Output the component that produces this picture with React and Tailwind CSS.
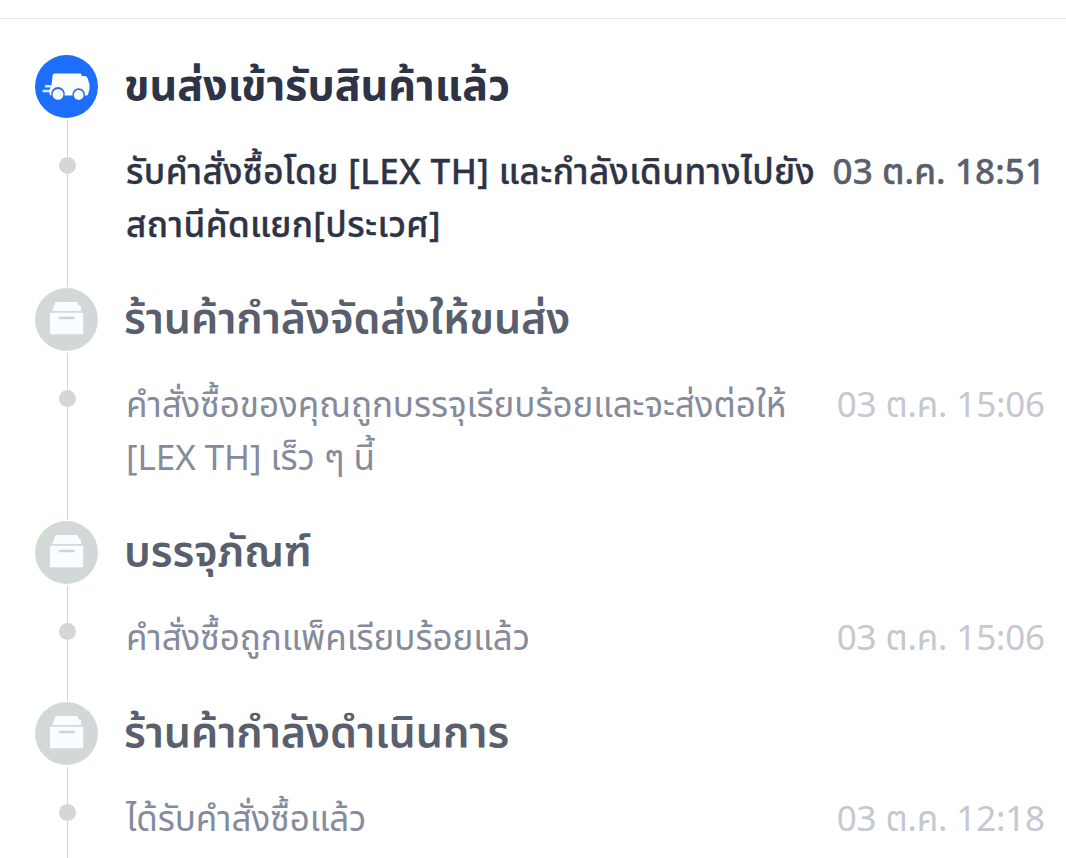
const steps = [
  {
    id: 1,
    active: true,
    title: 'ขนส่งเข้ารับสินค้าแล้ว',
    lines: ['รับคำสั่งซื้อโดย [LEX TH] และกำลังเดินทางไปยัง', 'สถานีคัดแยก[ประเวศ]'],
    time: '03 ต.ค. 18:51',
  },
  {
    id: 2,
    title: 'ร้านค้ากำลังจัดส่งให้ขนส่ง',
    lines: ['คำสั่งซื้อของคุณถูกบรรจุเรียบร้อยและจะส่งต่อให้', '[LEX TH] เร็ว ๆ นี้'],
    time: '03 ต.ค. 15:06',
  },
  {
    id: 3,
    title: 'บรรจุภัณฑ์',
    lines: ['คำสั่งซื้อถูกแพ็คเรียบร้อยแล้ว'],
    time: '03 ต.ค. 15:06',
  },
  {
    id: 4,
    title: 'ร้านค้ากำลังดำเนินการ',
    lines: ['ได้รับคำสั่งซื้อแล้ว'],
    time: '03 ต.ค. 12:18',
  },
]

function VanIcon() {
  return (
    <svg viewBox="0 0 63 63" className="block size-[63px] shrink-0">
      <circle cx="31.5" cy="31.5" r="31.5" fill="#1d6ffb" />
      <path d="M10 31.2h6M7.5 36h8" stroke="#c9f0ff" strokeWidth="2.4" />
      <path
        d="M19.5 18.5H46l.6 2.5H50q2 .3 2.6 2l1.9 6.5V34l-1.5 5.5q-.3 1-1.5 1H16q-1.5-.5-1.5-2V35l2-5 1.2-10q.3-1.5 1.8-1.5z"
        fill="#fafefe"
      />
      <circle cx="23" cy="38.8" r="6.8" fill="#3167df" />
      <circle cx="23" cy="39.4" r="5.4" fill="#f4fcff" />
      <circle cx="43.7" cy="39.4" r="6.2" fill="#3167df" />
      <circle cx="43.7" cy="40" r="4.9" fill="#f4fcff" />
    </svg>
  )
}

function BoxIcon() {
  return (
    <svg viewBox="0 0 63 63" className="block size-[63px] shrink-0">
      <defs>
        <linearGradient id="box-bg" x1="0" y1="0" x2="1" y2="1">
          <stop offset="0.12" stopColor="#cbdfc8" />
          <stop offset="0.24" stopColor="#d2d9d7" />
          <stop offset="0.8" stopColor="#d2d8d8" />
          <stop offset="0.9" stopColor="#d3dfd4" />
        </linearGradient>
      </defs>
      <circle cx="31.5" cy="31.5" r="31.5" fill="url(#box-bg)" />
      <path d="M20.5 14h22l.5 2.5 3 2V23H17.3z" fill="#fafdff" />
      <rect x="15" y="24.8" width="33.2" height="21.5" rx="0.8" fill="#fafdff" />
      <path d="M25 30.1h13.5" stroke="#ccd4d4" strokeWidth="2.5" strokeLinecap="round" />
    </svg>
  )
}

function Step({ step }) {
  return (
    <li className="flex">
      <div className="relative flex w-[63px] shrink-0 flex-col items-center">
        {step.active ? <VanIcon /> : <BoxIcon />}
        <div className="mt-[2px] mb-px ml-[2px] w-px flex-1 bg-[#d4d4d4]" />
        <span className="absolute top-[102px] left-[24px] size-[17px] rounded-full bg-[#d6d6d6]" />
      </div>
      <div className="ml-[26px] flex-1 pb-[38px]">
        <h2
          className={`h-[63px] text-[43px] leading-[57px] whitespace-nowrap ${
            step.active ? 'font-bold text-[#2e3346]' : 'font-semibold tracking-[-0.1px] text-[#595f6d]'
          }`}>
          {step.title}
        </h2>
        <div className="mt-[27px] ml-[2px] flex justify-between text-[35px] leading-[52.5px] whitespace-nowrap">
          <p
            className={
              step.active
                ? 'font-medium tracking-[0.42px] text-[#2e3346] [-webkit-text-stroke:0.35px_#2e3346]'
                : 'tracking-[-0.05px] text-[#858b9c]'
            }>
            {step.lines.map((line) => (
              <span key={line} className="block">{line}</span>
            ))}
          </p>
          <time
            className={
              step.active
                ? 'font-medium tracking-[0.1px] text-[#595f6d] [-webkit-text-stroke:0.35px_#595f6d]'
                : 'tracking-[-0.15px] text-[#c5c8d0]'
            }>
            {step.time}
          </time>
        </div>
      </div>
    </li>
  )
}

export default function App() {
  return (
    <div className="h-[858px] overflow-hidden bg-white pt-[18px] font-['Noto_Sans','Noto_Sans_Thai',sans-serif]">
      <div className="h-px bg-[#e2e6ee]" />
      <ul className="pt-9 pr-[21px] pl-[35px]">
        {steps.map((step) => (
          <Step key={step.id} step={step} />
        ))}
      </ul>
    </div>
  )
}
